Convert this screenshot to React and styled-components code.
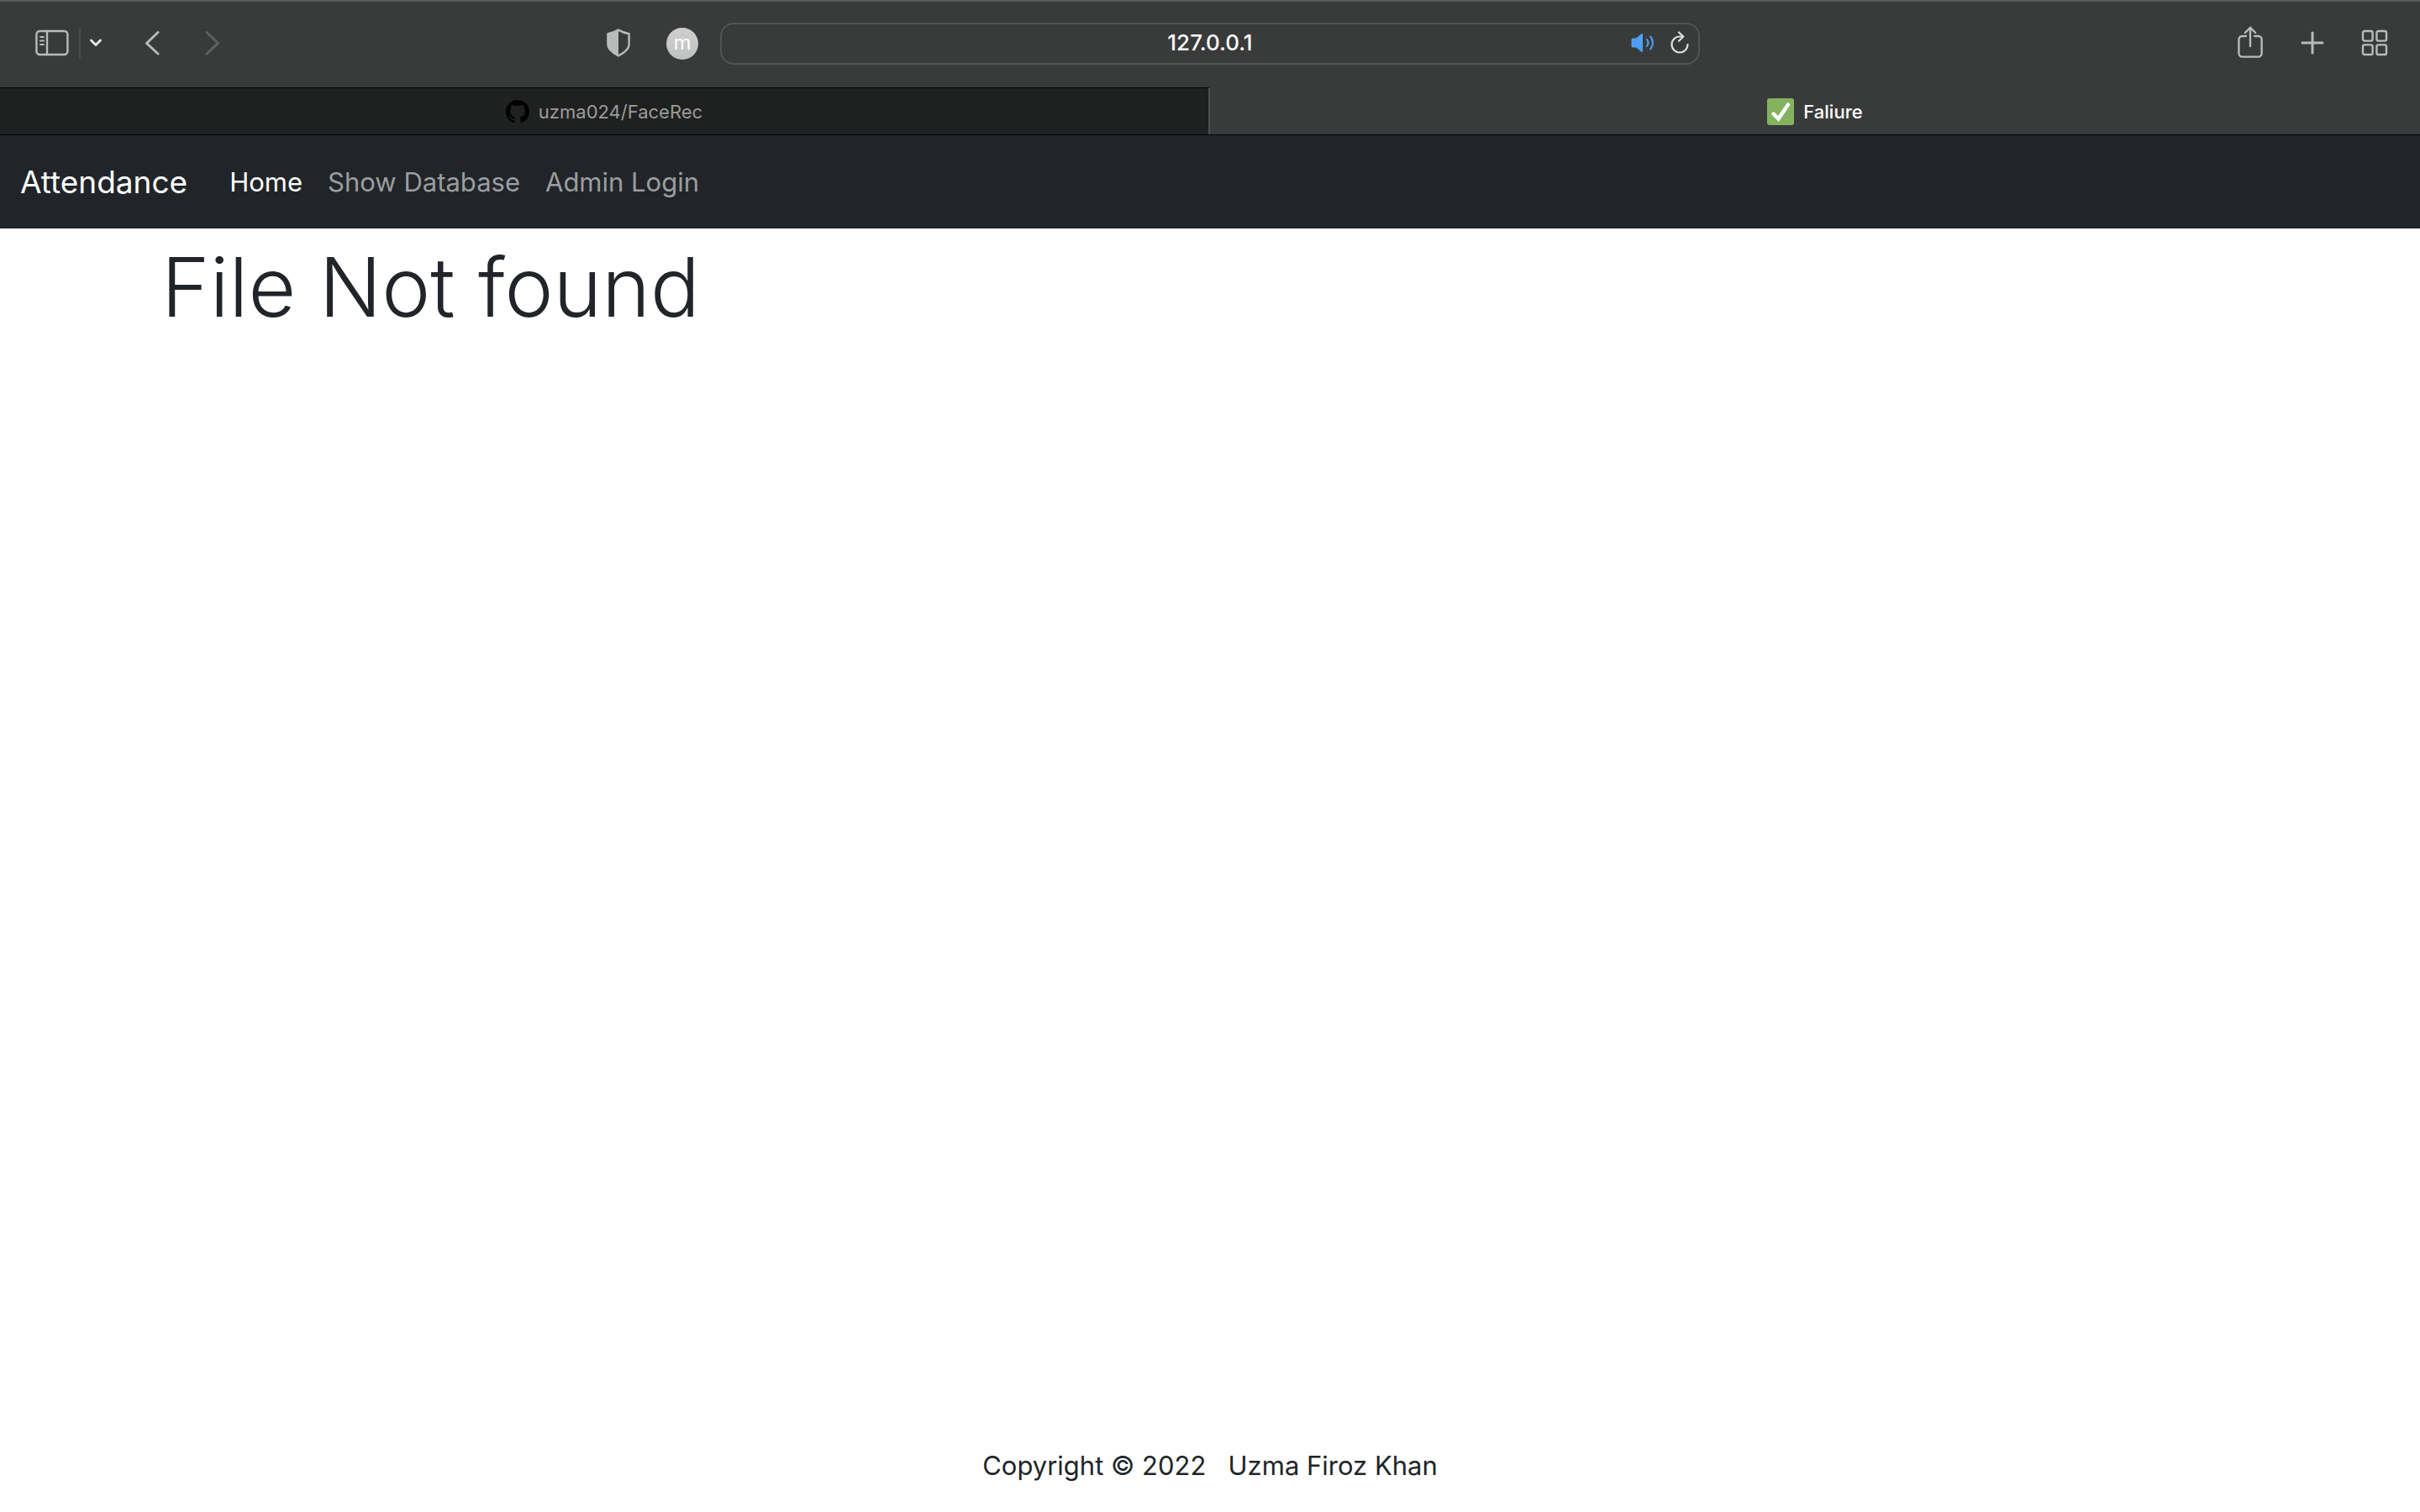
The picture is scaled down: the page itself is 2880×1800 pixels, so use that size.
import React from "react";
import styled, { createGlobalStyle } from "styled-components";

const GlobalStyle = createGlobalStyle`
  *, *::before, *::after { box-sizing: border-box; }
  body {
    margin: 0;
    background: #ffffff;
    color: #212529;
    font-family: Inter, "Liberation Sans", sans-serif;
  }
`;

const Window = styled.div`
  display: flex;
  flex-direction: column;
  min-height: 100vh;
`;

const Toolbar = styled.div`
  display: grid;
  grid-template-columns: 1fr minmax(0, 1166px) 1fr;
  column-gap: 26px;
  align-items: center;
  height: 104px;
  padding-bottom: 2px;
  border-top: 2px solid #5b5d5c;
  background: #393b3a;
`;

const ToolGroup = styled.div`
  display: flex;
  align-items: center;
  gap: ${(p) => p.$gap || 34}px;
`;

const LeftTools = styled.div`
  display: flex;
  align-items: center;
  justify-content: space-between;
  padding-left: 42px;
`;

const RightTools = styled(ToolGroup)`
  justify-content: flex-end;
  padding-right: 34px;
`;

const IconButton = styled.button`
  display: flex;
  align-items: center;
  justify-content: center;
  width: ${(p) => p.$width || 40}px;
  height: 40px;
  padding: 0 0 2px;
  border: 0;
  background: none;
  color: ${(p) => p.$color || "#b9bbba"};

  svg { display: block; flex: none; }
`;

const SidebarControl = styled.div`
  display: flex;
  align-items: center;
`;

const Divider = styled.span`
  width: 2px;
  height: 36px;
  margin: 0 8px 0 12px;
  background: #4d4f4e;
`;

const Avatar = styled.button`
  width: 38px;
  height: 38px;
  padding: 0 0 2px;
  border: 0;
  border-radius: 50%;
  background: linear-gradient(#cecece, #c0c2c1);
  color: #ffffff;
  font: 400 24px/36px Inter, sans-serif;
`;

const AddressBar = styled.div`
  display: grid;
  grid-template-columns: 82px 1fr 82px;
  align-items: center;
  height: 50px;
  border: 2px solid #535554;
  border-radius: 16px;
`;

const AddressInput = styled.input`
  grid-column: 2;
  width: 100%;
  padding: 0 0 2px;
  border: 0;
  outline: 0;
  background: none;
  color: #ffffff;
  text-align: center;
  font: 500 26px/40px Inter, sans-serif;
`;

const AddressTools = styled.div`
  display: flex;
  gap: 14px;
`;

const TabBar = styled.div`
  display: grid;
  grid-template-columns: 1fr 1fr;
  height: 57px;
  border-bottom: 1px solid #000000;
  background: #393b3a;
`;

const Tab = styled.button`
  display: flex;
  align-items: center;
  justify-content: center;
  gap: 11px;
  padding: 0;
  border: 0;
  border-top: 1px solid ${(p) => (p.$active ? "#393b3a" : "#000000")};
  border-right: ${(p) => (p.$active ? "0" : "2px solid #4d4f4e")};
  background: ${(p) => (p.$active ? "#393b3a" : "#1f2120")};
  color: ${(p) => (p.$active ? "#ffffff" : "#9b9c9b")};
  font: ${(p) => (p.$active ? 500 : 400)} 22px/28px Inter, sans-serif;

  svg { display: block; flex: none; }
`;

const Navbar = styled.nav`
  display: flex;
  align-items: center;
  gap: 50px;
  height: 111px;
  padding: 0 24px;
  background: #212529;
`;

const Brand = styled.a`
  color: #ffffff;
  font-size: 37px;
  line-height: 60px;
  text-decoration: none;
`;

const NavList = styled.ul`
  display: flex;
  gap: 30px;
  margin: 0;
  padding: 0;
  list-style: none;
`;

const NavLink = styled.a`
  color: ${(p) => (p.$active ? "#ffffff" : "#9b9d9f")};
  font-size: 31px;
  line-height: 48px;
  text-decoration: none;
`;

const Main = styled.main`
  flex: 1;
  padding: 0 192px;
`;

const Title = styled.h1`
  margin: 0;
  padding-top: 4px;
  font-size: 98px;
  font-weight: 300;
  line-height: 132px;
`;

const Footer = styled.footer`
  padding: 0 24px 31px;
  text-align: center;
  font-size: 31px;
  line-height: 48px;
`;

const line = { fill: "none", stroke: "currentColor", strokeLinecap: "round", strokeLinejoin: "round" };

const SidebarIcon = () => (
  <svg width="40" height="32" viewBox="0 0 40 32" {...line} strokeWidth="2.4">
    <rect x="1.4" y="2" width="37" height="28" rx="4" />
    <path d="M14 2v28" />
    <path d="M6 9h4M6 13.5h4M6 18h4" strokeWidth="2" />
  </svg>
);

const ChevronDown = () => (
  <svg width="16" height="12" viewBox="0 0 16 12" {...line} strokeWidth="3">
    <path d="M2.5 3 8 8.5 13.5 3" />
  </svg>
);

const BackIcon = () => (
  <svg width="18" height="30" viewBox="0 0 18 30" {...line} strokeWidth="3">
    <path d="M16 2.5 2.5 15.5 16 28" />
  </svg>
);

const ForwardIcon = () => (
  <svg width="18" height="30" viewBox="0 0 18 30" {...line} strokeWidth="3">
    <path d="M2 2.5 15.5 15.5 2 28" />
  </svg>
);

const ShieldIcon = () => (
  <svg width="28" height="34" viewBox="0 0 28 34" {...line} strokeWidth="2.4">
    <path d="M14 1.6C10 4 6 5.4 1.4 6.2V19c0 6 6 10 12.6 13.4C20.6 29 26.6 25 26.6 19V6.2C22 5.4 18 4 14 1.6Z" />
    <path d="M14 1.6C10 4 6 5.4 1.4 6.2V19c0 6 6 10 12.6 13.4Z" fill="currentColor" stroke="none" />
  </svg>
);

const SpeakerIcon = () => (
  <svg width="30" height="30" viewBox="0 0 30 30" {...line} strokeWidth="2">
    <path d="M3 9.5h4L13.5 4.2a1 1 0 0 1 1.5.8v20a1 1 0 0 1-1.5.8L7 20.5H3A1.5 1.5 0 0 1 1.5 19v-8A1.5 1.5 0 0 1 3 9.5Z" fill="currentColor" stroke="none" />
    <path d="M20 11c1.8 2.4 1.8 5.6 0 8M24.2 7.5c3.6 4.4 3.6 10.6 0 15" />
  </svg>
);

const ReloadIcon = () => (
  <svg width="24" height="28" viewBox="0 0 24 28" {...line} strokeWidth="2.2">
    <path d="M21.5 16a9.5 9.5 0 1 1-9.5-9.500h4" />
    <path d="M11 1.5 16.2 6.5 11 11.7" />
  </svg>
);

const ShareIcon = () => (
  <svg width="30" height="40" viewBox="0 0 30 40" {...line} strokeWidth="2.4">
    <path d="M10 12H5.4a4 4 0 0 0-4 4v16.600a4 4 0 0 0 4 4h19.200a4 4 0 0 0 4-4V16a4 4 0 0 0-4-4H20" />
    <path d="M15 24V1.800M8.800 8 15 1.800 21.200 8" />
  </svg>
);

const PlusIcon = () => (
  <svg width="28" height="28" viewBox="0 0 28 28" {...line} strokeWidth="3">
    <path d="M14 2v24M2 14h24" />
  </svg>
);

const GridIcon = () => (
  <svg width="32" height="32" viewBox="0 0 32 32" {...line} strokeWidth="2.4">
    <rect x="2" y="2" width="11.6" height="11.6" rx="2" />
    <rect x="18.4" y="2" width="11.6" height="11.6" rx="2" />
    <rect x="2" y="18.4" width="11.6" height="11.6" rx="2" />
    <rect x="18.4" y="18.4" width="11.6" height="11.6" rx="2" />
  </svg>
);

const GithubMark = () => (
  <svg width="28" height="28" viewBox="0 0 16 16" fill="#000000">
    <path d="M8 0C3.58 0 0 3.58 0 8c0 3.54 2.29 6.53 5.47 7.59.4.07.55-.17.55-.38 0-.19-.01-.82-.01-1.49-2.01.37-2.53-.49-2.69-.94-.09-.23-.48-.94-.82-1.13-.28-.15-.68-.52-.01-.53.63-.01 1.08.58 1.23.82.72 1.21 1.87.87 2.33.66.07-.52.28-.87.51-1.07-1.78-.2-3.64-.89-3.64-3.95 0-.87.31-1.59.82-2.15-.08-.2-.36-1.02.08-2.12 0 0 .67-.21 2.2.82.64-.18 1.32-.27 2-.27.68 0 1.36.09 2 .27 1.53-1.04 2.2-.82 2.2-.82.44 1.1.16 1.92.08 2.12.51.56.82 1.27.82 2.15 0 3.07-1.87 3.75-3.65 3.95.29.25.54.73.54 1.48 0 1.07-.01 1.93-.01 2.2 0 .21.15.46.55.38A8.013 8.013 0 0 0 16 8c0-4.42-3.58-8-8-8z" />
  </svg>
);

const CheckFavicon = () => (
  <svg width="32" height="32" viewBox="0 0 32 32">
    <rect width="32" height="32" rx="3" fill="#83b35f" />
    <path d="M7.5 18.5 13.5 24.5 25 7.5" fill="none" stroke="#ffffff" strokeWidth="4.4" strokeLinecap="round" strokeLinejoin="miter" />
  </svg>
);

export default function App() {
  return (
    <Window>
      <GlobalStyle />
      <header>
        <Toolbar>
          <LeftTools>
            <ToolGroup $gap={37}>
              <SidebarControl>
                <IconButton aria-label="Show sidebar"><SidebarIcon /></IconButton>
                <Divider />
                <IconButton aria-label="Tab groups" $width={20} $color="#e6e6e6"><ChevronDown /></IconButton>
              </SidebarControl>
              <ToolGroup $gap={32}>
                <IconButton aria-label="Back"><BackIcon /></IconButton>
                <IconButton aria-label="Forward" disabled $color="#5f6160"><ForwardIcon /></IconButton>
              </ToolGroup>
            </ToolGroup>
            <ToolGroup $gap={37}>
              <IconButton aria-label="Privacy report"><ShieldIcon /></IconButton>
              <Avatar>m</Avatar>
            </ToolGroup>
          </LeftTools>
          <AddressBar>
            <AddressInput aria-label="Address" defaultValue="127.0.0.1" />
            <AddressTools>
              <IconButton aria-label="Mute tab" $width={32} $color="#4f9ff8"><SpeakerIcon /></IconButton>
              <IconButton aria-label="Reload" $width={28} $color="#dededf"><ReloadIcon /></IconButton>
            </AddressTools>
          </AddressBar>
          <RightTools>
            <IconButton aria-label="Share"><ShareIcon /></IconButton>
            <IconButton aria-label="New tab"><PlusIcon /></IconButton>
            <IconButton aria-label="Tab overview"><GridIcon /></IconButton>
          </RightTools>
        </Toolbar>
        <TabBar>
          <Tab>
            <GithubMark />
            uzma024/FaceRec
          </Tab>
          <Tab $active>
            <CheckFavicon />
            Faliure
          </Tab>
        </TabBar>
      </header>
      <Navbar>
        <Brand href="#">Attendance</Brand>
        <NavList>
          <li><NavLink href="#" $active>Home</NavLink></li>
          <li><NavLink href="#">Show Database</NavLink></li>
          <li><NavLink href="#">Admin Login</NavLink></li>
        </NavList>
      </Navbar>
      <Main>
        <Title>File Not found</Title>
      </Main>
      <Footer>Copyright © 2022 &nbsp; Uzma Firoz Khan</Footer>
    </Window>
  );
}
